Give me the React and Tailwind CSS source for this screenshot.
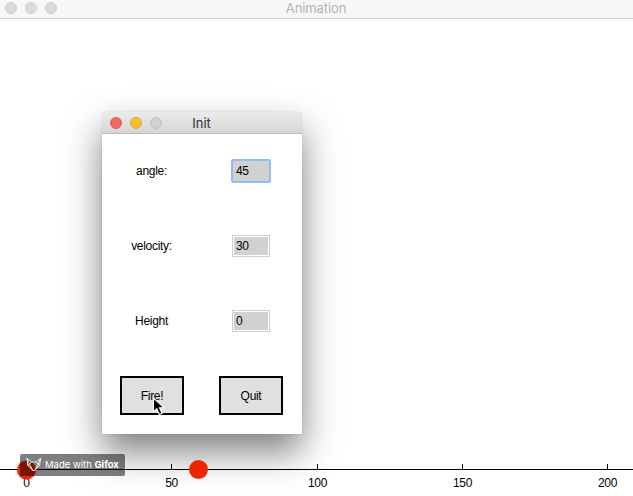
const ticks = [
  { x: 26.5, label: '0' },
  { x: 171.5, label: '50' },
  { x: 317.5, label: '100' },
  { x: 462.5, label: '150' },
  { x: 607.5, label: '200' },
];

function Plot() {
  return (
    <svg className="block h-[477px] w-[633px] font-['Liberation_Sans',Arial,sans-serif]" viewBox="0 19 633 477">
      <path d="M0 469.5H633" stroke="#000" />
      {ticks.map((t) => (
        <g key={t.label}>
          <path d={`M${t.x} 464V469`} stroke="#000" />
          <text x={t.x} y="487" textAnchor="middle" fontSize="12" letterSpacing="-0.4">
            {t.label}
          </text>
        </g>
      ))}
      <circle cx="26.5" cy="470" r="9.5" fill="#f02800" />
    </svg>
  );
}

function Field({ label, value, focused }) {
  return (
    <>
      <label className="flex items-center justify-center pr-px tracking-[-0.3px]">{label}</label>
      <div className="flex items-center justify-center pr-0.5">
        <div
          className={
            focused
              ? 'flex h-6 w-10 items-center rounded-xs border-2 border-[#8ebfee] bg-[#d1d1d1] pl-[3px] tracking-[-0.3px]'
              : 'h-[22px] w-[38px] border border-[#cfcfcf] bg-white p-px tracking-[-0.3px]'
          }
        >
          {focused ? value : <div className="flex h-full items-center bg-[#d1d1d1] pl-0.5">{value}</div>}
        </div>
      </div>
    </>
  );
}

function Button({ children }) {
  return (
    <button className="h-[39px] w-16 border-2 border-black bg-[#e0e0e0] tracking-[-0.3px]">{children}</button>
  );
}

function InitWindow() {
  return (
    <div className="absolute left-[102px] top-28 h-[322px] w-[200px] rounded-t-[5px] bg-white shadow-[0_0_1px_rgba(0,0,0,0.4),0_18px_36px_0px_rgba(0,0,0,0.5)]">
      <div className="grid h-[22px] grid-cols-[1fr_auto_1fr] items-center rounded-t-[5px] border-b border-[#bcbcbc] bg-linear-to-b from-[#ebebeb] to-[#d6d6d6]">
        <div className="flex gap-2 pl-2">
          <span className="size-3 rounded-full border border-[#df5650] bg-[#ee6a5f]" />
          <span className="size-3 rounded-full border border-[#e0a533] bg-[#fbbd30]" />
          <span className="size-3 rounded-full border border-[#c1c1c1] bg-[#d2d2d2]" />
        </div>
        <span className="pr-px font-['Inter',sans-serif] text-[13px] leading-[22px] text-[#303030]">Init</span>
      </div>
      <div className="grid h-[299px] grid-cols-2 grid-rows-[74px_76px_74px_75px] font-['Liberation_Sans',Arial,sans-serif] text-xs text-black">
        <Field label="angle:" value="45" focused />
        <Field label="velocity:" value="30" />
        <Field label="Height" value="0" />
        <div className="flex items-center justify-center">
          <Button>Fire!</Button>
        </div>
        <div className="flex items-center justify-center pr-0.5">
          <Button>Quit</Button>
        </div>
      </div>
    </div>
  );
}

function Cursor() {
  return (
    <svg className="absolute left-[152px] top-[397px] h-5 w-4" viewBox="0 0 16 20">
      <path d="M1.5 1V14.7L4.8 11.7L7.3 17.5L10 16.3L7.5 10.7H12Z" fill="#000" stroke="#fff" strokeWidth="1.1" />
    </svg>
  );
}

function GifoxBadge() {
  return (
    <div className="absolute left-5 top-[454px] flex h-[22px] w-[105px] items-center rounded-xs bg-black/50 pl-[6px] text-white">
      <svg className="h-4 w-4" viewBox="0 0 16 16" fill="none" stroke="#ececec" strokeWidth="1" strokeLinejoin="round">
        <path d="M1 1.2L5.5 5H10.2L14.6 1.2L13.6 8.4L11.8 9.8L8.8 13.5H6.8L3.6 9.8L1.7 8.4Z" />
        <path d="M1 1.2L3.4 7.2L6.8 13.5M14.6 1.2L12.2 7.2L8.8 13.5M5.5 5L3.4 7.2L1.7 8.4M10.2 5L12.2 7.2L13.6 8.4" />
      </svg>
      <span className="ml-[3px] whitespace-nowrap font-['Inter',sans-serif] text-[9.5px] leading-none">
        Made with <b>Gifox</b>
      </span>
    </div>
  );
}

export default function App() {
  return (
    <div className="relative h-[496px] w-[633px] overflow-hidden bg-white">
      <header className="grid h-[19px] grid-cols-[1fr_auto_1fr] items-center border-b border-[#cfcfcf] bg-[#f7f7f7]">
        <div className="flex gap-2 pb-[3px] pl-[5px]">
          <span className="size-3 rounded-full border border-[#d0d0d0] bg-[#dadada]" />
          <span className="size-3 rounded-full border border-[#d0d0d0] bg-[#dadada]" />
          <span className="size-3 rounded-full border border-[#d0d0d0] bg-[#dadada]" />
        </div>
        <span className="pr-px pb-0.5 font-['Inter',sans-serif] text-[13px] leading-4 tracking-[-0.1px] text-[#b4b4b4]">Animation</span>
      </header>
      <Plot />
      <InitWindow />
      <div className="absolute left-[189px] top-[460px] size-[19px] rounded-full bg-[#ee2500]" />
      <Cursor />
      <GifoxBadge />
    </div>
  );
}
